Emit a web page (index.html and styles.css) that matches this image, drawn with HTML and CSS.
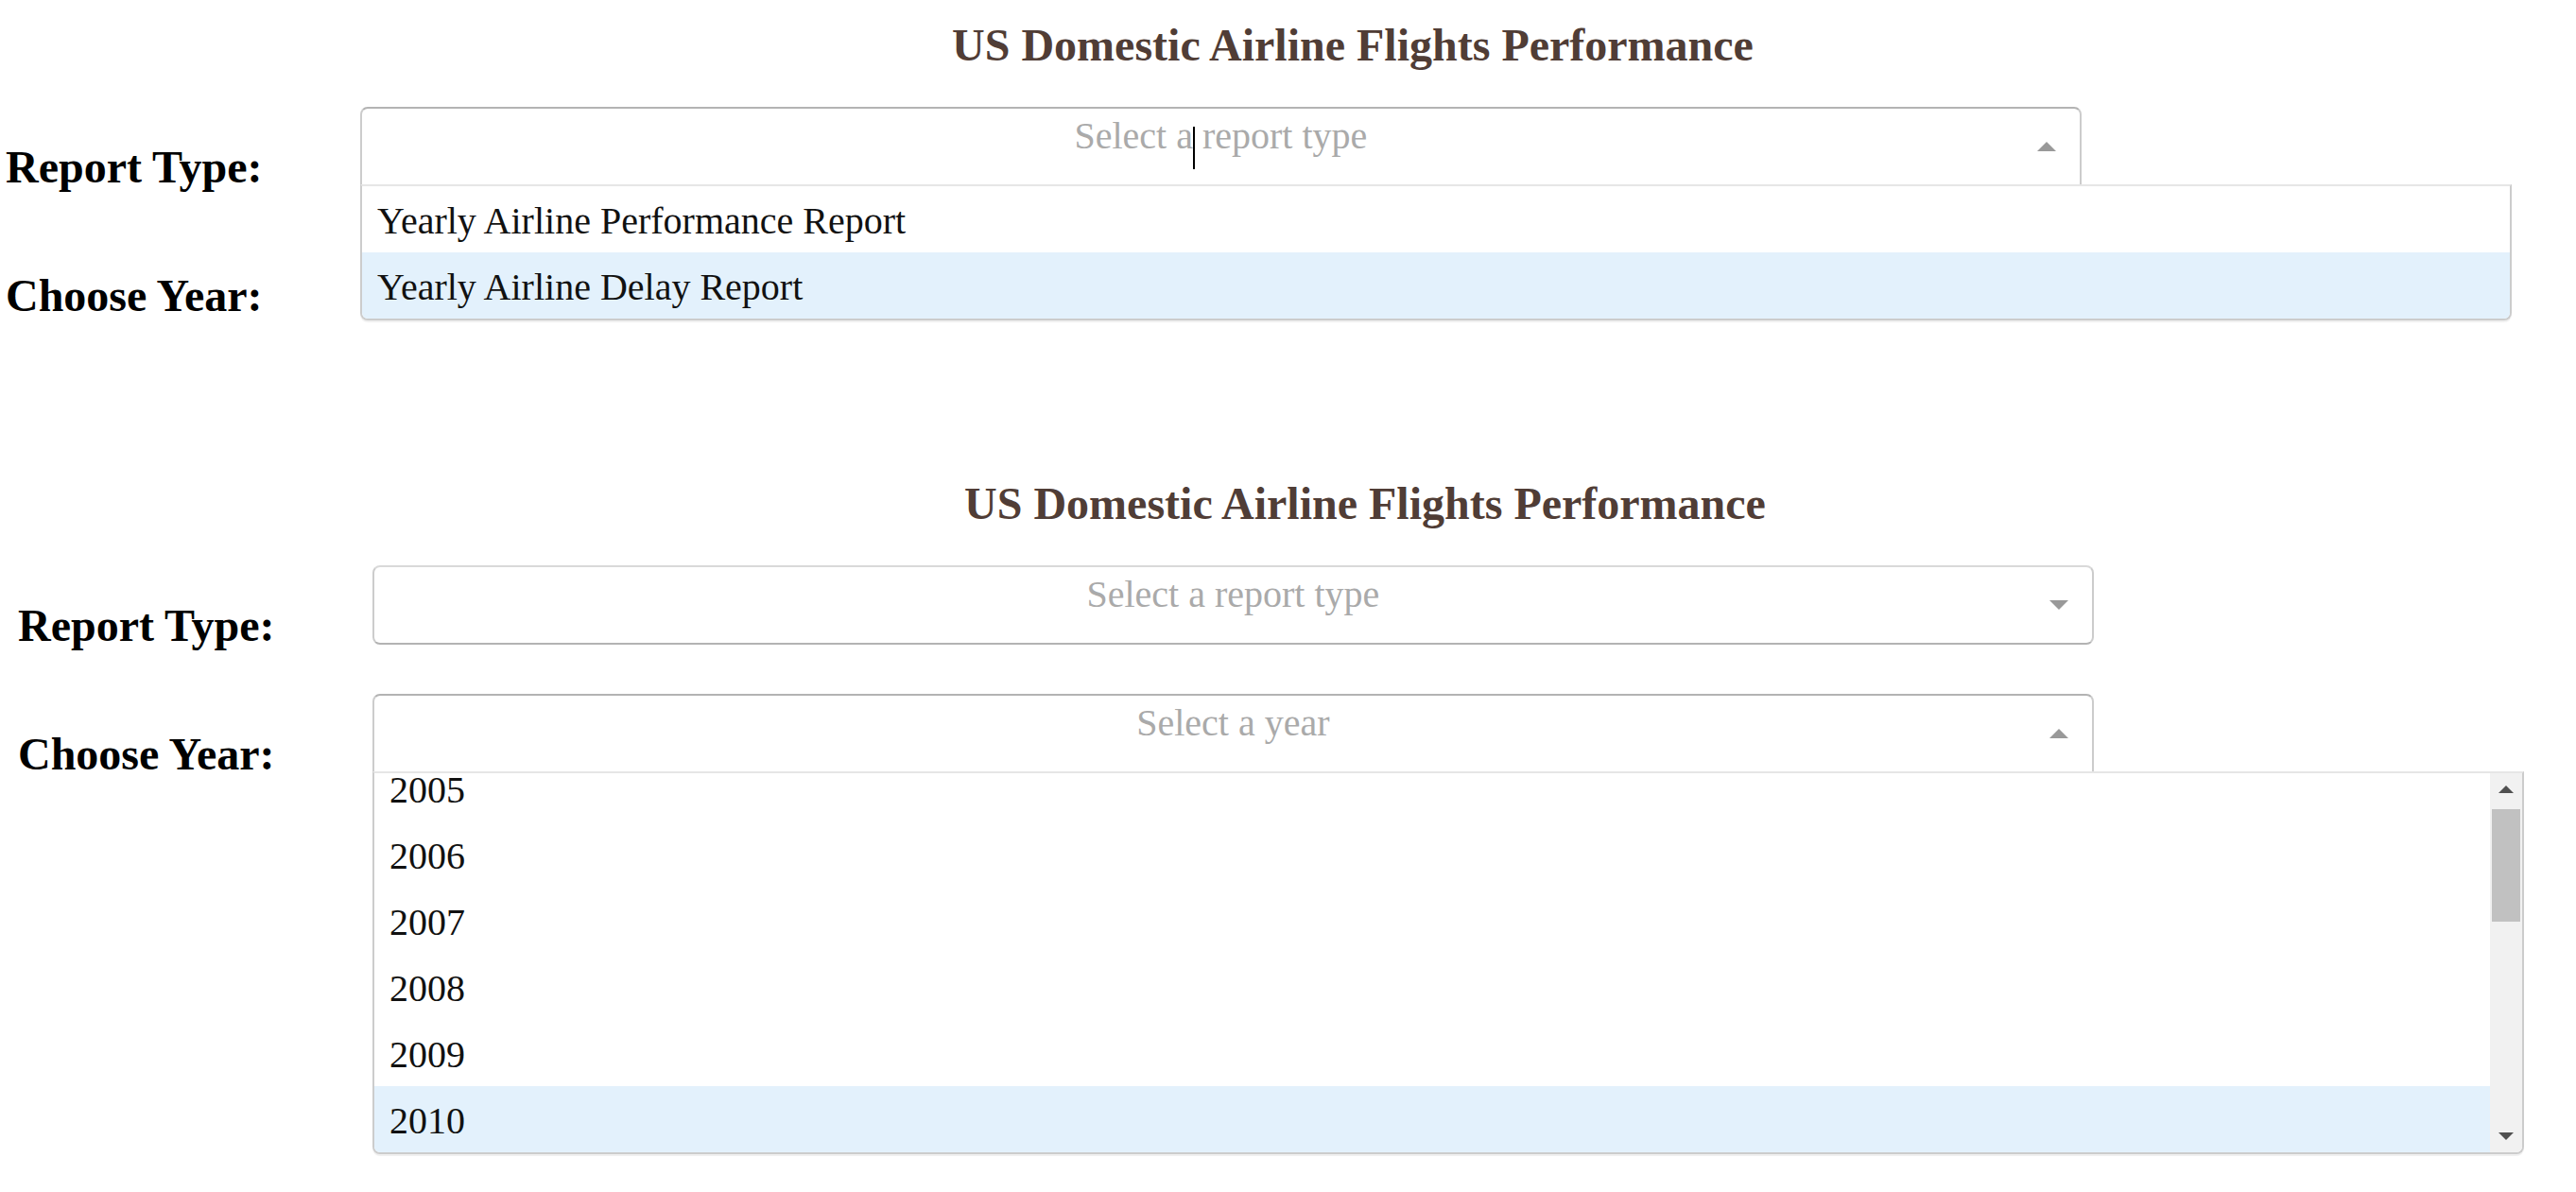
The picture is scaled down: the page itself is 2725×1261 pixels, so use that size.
FILE: index.html
```html
<!DOCTYPE html>
<html lang="en">
<head>
<meta charset="utf-8">
<title>US Domestic Airline Flights Performance</title>
<link rel="stylesheet" href="styles.css">
</head>
<body>
<section class="panel panel-a">
  <h1 class="title">US Domestic Airline Flights Performance</h1>
  <div class="row">
    <h2 class="label">Report Type:</h2>
    <div class="dd dd-open dd-top">
      <div class="control">
        <div class="placeholder">Select a<span class="caret"></span> report type</div>
        <span class="arrow arrow-up"></span>
      </div>
      <div class="menu">
        <div class="option">Yearly Airline Performance Report</div>
        <div class="option focused">Yearly Airline Delay Report</div>
      </div>
    </div>
  </div>
  <div class="row">
    <h2 class="label">Choose Year:</h2>
    <div class="dd">
      <div class="control">
        <div class="placeholder">Select a year</div>
        <span class="arrow arrow-down"></span>
      </div>
    </div>
  </div>
</section>

<section class="panel panel-b">
  <h1 class="title">US Domestic Airline Flights Performance</h1>
  <div class="row">
    <h2 class="label">Report Type:</h2>
    <div class="dd">
      <div class="control">
        <div class="placeholder">Select a report type</div>
        <span class="arrow arrow-down"></span>
      </div>
    </div>
  </div>
  <div class="row">
    <h2 class="label">Choose Year:</h2>
    <div class="dd dd-open dd-top">
      <div class="control">
        <div class="placeholder">Select a year</div>
        <span class="arrow arrow-up"></span>
      </div>
      <div class="menu menu-scroll">
        <div class="list">
          <div class="list-inner">
            <div class="option">2005</div>
            <div class="option">2006</div>
            <div class="option">2007</div>
            <div class="option">2008</div>
            <div class="option">2009</div>
            <div class="option focused">2010</div>
          </div>
        </div>
        <div class="scrollbar">
          <div class="sb-btn"><span class="sb-arrow sb-up"></span></div>
          <div class="sb-track"><div class="sb-thumb"></div></div>
          <div class="sb-btn"><span class="sb-arrow sb-down"></span></div>
        </div>
      </div>
    </div>
  </div>
</section>
</body>
</html>
```

FILE: styles.css
```css
html {
  overflow: hidden;
}

html, body {
  margin: 0;
  padding: 0;
  background: #ffffff;
}

body {
  font-family: "Liberation Serif", "Times New Roman", serif;
  color: #000;
  min-height: 1261px;
}

.panel {
  width: 2706px;
  box-sizing: border-box;
  padding-top: 20px;
}

.panel-a {
  height: 485px;
  margin-left: 6px;
}

.panel-b {
  margin-left: 19px;
}

.title {
  margin: 0 0 32px;
  padding-left: 144px;
  font-size: 48px;
  line-height: 55px;
  font-weight: bold;
  text-align: center;
  color: #503D36;
}

.row {
  display: flex;
  align-items: flex-start;
}

.label {
  flex: 0 0 369px;
  margin: 42px 0 38px;
  font-size: 48px;
  line-height: 56px;
  font-weight: bold;
  color: #000;
  white-space: nowrap;
}

.dd {
  position: relative;
  width: 2276px;
  padding: 6px;
}

.dd-top {
  z-index: 5;
}

.control {
  box-sizing: border-box;
  width: 80%;
  height: 84px;
  border: 2px solid #ccc;
  border-color: #d9d9d9 #ccc #b3b3b3;
  border-radius: 8px;
  background: #fff;
  display: grid;
}

.dd-open .control {
  border-color: #b3b3b3 #ccc #d9d9d9;
  border-bottom-left-radius: 0;
  border-bottom-right-radius: 0;
}

.placeholder {
  grid-area: 1 / 1;
  align-self: start;
  padding: 7px 20px 0;
  font-size: 40px;
  line-height: 44px;
  color: #aaa;
  text-align: center;
  white-space: nowrap;
}

.caret {
  display: inline-block;
  width: 0;
  height: 45px;
  border-left: 2px solid #000;
  margin-right: -2px;
  vertical-align: -22px;
}

.arrow {
  grid-area: 1 / 1;
  justify-self: end;
  align-self: center;
  margin-right: 25px;
  width: 0;
  height: 0;
  border-style: solid;
}

.arrow-up {
  border-width: 0 10px 10px;
  border-color: transparent transparent #999;
}

.arrow-down {
  border-width: 10px 10px 0;
  border-color: #999 transparent transparent;
}

.menu {
  position: absolute;
  top: 88px;
  left: 6px;
  width: 2276px;
  box-sizing: border-box;
  border: 2px solid #ccc;
  border-top-color: #e6e6e6;
  border-radius: 0 0 8px 8px;
  background: #fff;
  box-shadow: 0 2px 0 rgba(0, 0, 0, 0.06);
  overflow: hidden;
}

.option {
  padding: 18px 16px 14px;
  font-size: 40px;
  line-height: 38px;
  color: #111;
  white-space: nowrap;
}

.option.focused {
  background: #e3f1fc;
}

.menu-scroll {
  display: flex;
  height: 405px;
}

.list {
  flex: 1;
  overflow: hidden;
}

.list-inner {
  margin-top: -19px;
}

.scrollbar {
  flex: 0 0 34px;
  display: flex;
  flex-direction: column;
  background: #f1f1f1;
}

.sb-btn {
  flex: 0 0 34px;
  display: flex;
  align-items: center;
  justify-content: center;
}

.sb-arrow {
  width: 0;
  height: 0;
  border-style: solid;
}

.sb-up {
  border-width: 0 8px 8px;
  border-color: transparent transparent #505050;
}

.sb-down {
  border-width: 8px 8px 0;
  border-color: #505050 transparent transparent;
}

.sb-track {
  flex: 1;
  padding: 4px 2px 0;
}

.sb-thumb {
  height: 119px;
  background: #c1c1c1;
}
```
